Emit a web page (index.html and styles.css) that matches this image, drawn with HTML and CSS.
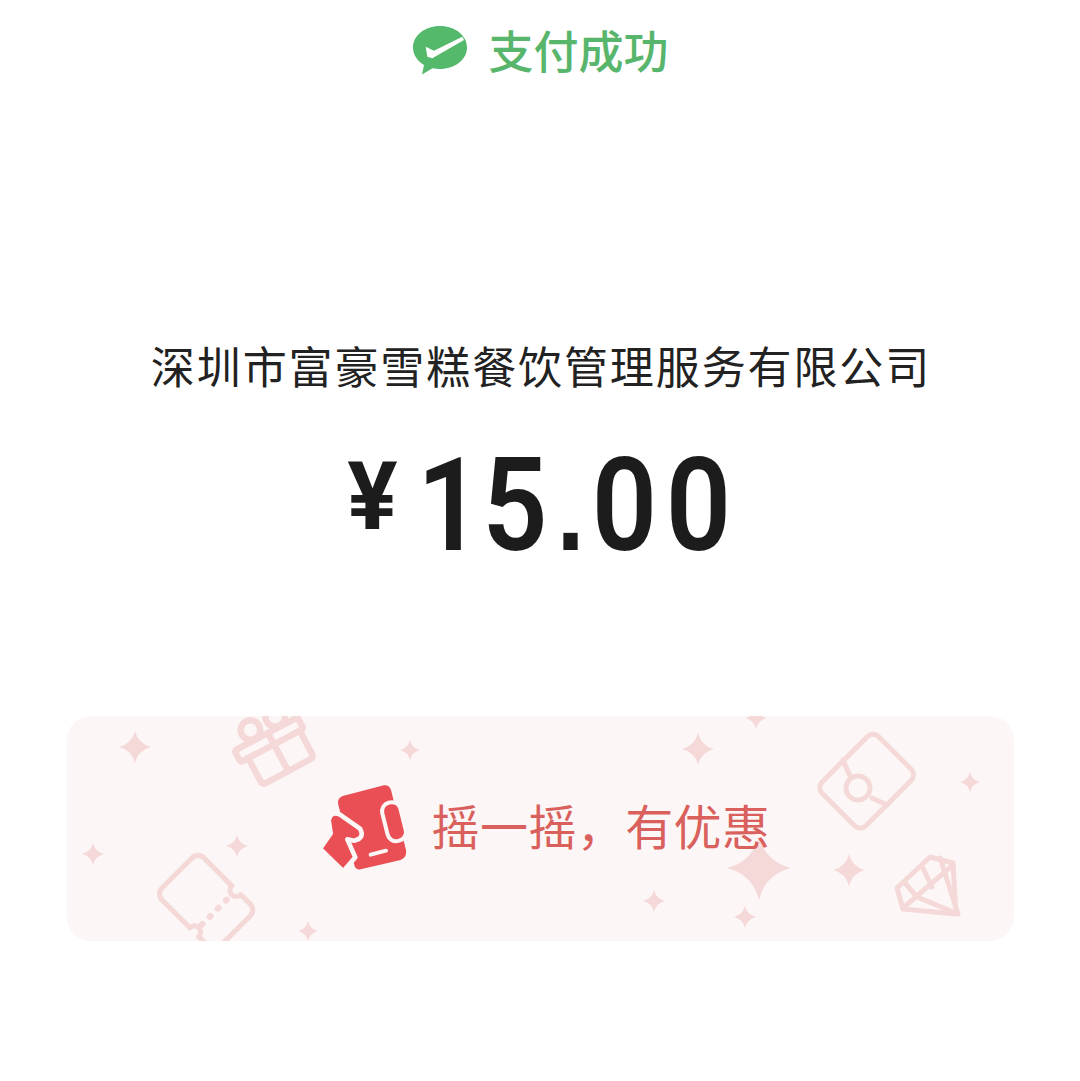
FILE: index.html
```html
<!DOCTYPE html>
<html lang="zh-CN">

<head>
  <meta charset="UTF-8">
  <title>支付成功</title>
  <link rel="stylesheet" href="styles.css">
</head>

<body>
  <div id="container">

    <div class="status">
      <svg class="status-icon" viewBox="0 0 56 52">
        <path fill="#55b96b" d="M28 1C13 1 1 10.500 1 22.500C1 30 5.500 36 12 40L10 49.500L20.500 43.300C23 43.800 25.500 44 28 44C43 44 55 34.500 55 22.500C55 10.500 43 1 28 1Z"/>
        <path fill="#fff" d="M13.700 21.700L22 25.700L50.300 11.700L52 15L20.300 33.300L15.300 31.700Z"/>
      </svg>
      <span class="status-text">支付成功</span>
    </div>

    <div class="merchant">深圳市富豪雪糕餐饮管理服务有限公司</div>

    <div class="amount">
      <span class="currency">¥</span>
      <span class="value"><span class="one">1</span>5<span class="dot">.</span>00</span>
    </div>

    <div class="promo">
      <svg class="promo-bg" viewBox="0 0 947 225">
        <defs>
          <path id="star" d="M0-1Q.2-.2 1 0Q.2.2 0 1Q-.2.2-1 0Q-.2-.2 0-1Z"/>
        </defs>
        <g fill="#f5d9d9">
          <use href="#star" transform="translate(68 31) scale(16)"/>
          <use href="#star" transform="translate(26 138) scale(11)"/>
          <use href="#star" transform="translate(170 130) scale(11)"/>
          <use href="#star" transform="translate(241 215) scale(10)"/>
          <use href="#star" transform="translate(343 34) scale(10)"/>
          <use href="#star" transform="translate(631 33) scale(16)"/>
          <use href="#star" transform="translate(689 2) scale(11)"/>
          <use href="#star" transform="translate(692 152) scale(32)"/>
          <use href="#star" transform="translate(782 154) scale(16)"/>
          <use href="#star" transform="translate(903 66) scale(10)"/>
          <use href="#star" transform="translate(587 185) scale(11)"/>
          <use href="#star" transform="translate(678 201) scale(11)"/>
        </g>
        <g fill="none" stroke="#f5d9d9" stroke-width="5" stroke-linejoin="round" stroke-linecap="round">
          <!-- gift -->
          <g stroke-width="6" transform="translate(199 18) rotate(-28) scale(1.08)">
            <rect x="-33" y="0" width="66" height="12" rx="2"/>
            <path d="M-25 12V36Q-25 40-21 40H25Q29 40 29 36V12"/>
            <path d="M2 0V40"/>
            <circle cx="-11" cy="-10" r="9"/>
            <circle cx="15" cy="-10" r="9"/>
          </g>
          <!-- ticket -->
          <g transform="translate(131 136) rotate(45) scale(1.04)">
            <path d="M8 0H46A6 6 0 0 0 58 0H71A8 8 0 0 1 79 8V49A8 8 0 0 1 71 57H58A6 6 0 0 0 46 57H8A8 8 0 0 1 0 49V8A8 8 0 0 1 8 0Z"/>
            <path d="M52 13V47" stroke-width="6" stroke-dasharray="1 10"/>
          </g>
          <!-- card with a round seal -->
          <rect x="0" y="0" width="62" height="80" rx="8" transform="translate(806 15) rotate(45)"/>
          <circle cx="791" cy="72" r="12"/>
          <path d="M776 44L783 60M805 82L820 89"/>
          <!-- diamond -->
          <path d="M863 141L886 147L889 198L836 193L830 172Z"/>
          <path d="M836 192L886 149M838 167L850 181L891 198M856 152L865 171M873 142L891 198"/>
        </g>
      </svg>
      <div class="promo-main">
        <svg class="promo-icon" viewBox="0 0 360 330">
          <path fill="#e94f54" d="M98 78L222 46Q238 44 243 60L288 240Q292 262 272 270L152 298Q136 300 133 285L85 105Q80 85 98 78Z"/>
          <path fill="#e94f54" stroke="#fcf7f6" stroke-width="14" stroke-linejoin="round" d="M30 236L62 190L56 150Q64 122 90 134L150 176Q166 204 132 212L112 208L136 262L100 304Z"/>
          <rect x="-28" y="-59" width="56" height="118" rx="26" transform="translate(252 155) rotate(-14)" fill="#e94f54" stroke="#fcf7f6" stroke-width="12"/>
          <path stroke="#fcf7f6" stroke-width="12" stroke-linecap="round" d="M182 254L228 242"/>
        </svg>
        <span class="promo-text">摇一摇，有优惠</span>
      </div>
    </div>

  </div>
</body>

</html>
```

FILE: styles.css
```css
body,
html {
  padding: 0;
  margin: 0;
}

body {
  background: #FFF;
  font-family: "Noto Sans CJK SC", sans-serif;
}

#container {
  height: 1081px;
  display: flex;
  flex-direction: column;
  align-items: center;
}

.status {
  display: flex;
  align-items: center;
  height: 50px;
  margin-top: 24px;
  gap: 20px;
}

.status-icon {
  width: 56px;
  height: 52px;
  margin-top: 4px;
  margin-left: 1px;
}

.status-text {
  font-size: 45px;
  font-weight: 500;
  color: #58b56c;
}

.merchant {
  margin-top: 259px;
  padding-left: 2px;
  font-size: 44px;
  line-height: 64px;
  letter-spacing: 1.9px;
  color: #222;
}

.amount {
  display: flex;
  margin-top: 44px;
  height: 130px;
  color: #1c1c1c;
  font-family: Roboto, sans-serif;
}

.currency {
  font-size: 94px;
  font-weight: 700;
  line-height: 112px;
  margin-right: 19px;
}

/* digits are narrower than Roboto's, so squeeze them sideways */
.value {
  width: 316px;
  font-size: 130px;
  font-weight: 600;
  line-height: 130px;
  letter-spacing: 10px;
  white-space: nowrap;
  transform: scaleX(.88);
  transform-origin: left center;
}

.one {
  letter-spacing: 0;
}

.dot {
  font-family: "Liberation Sans", sans-serif;
  font-size: 115px;
  font-weight: 700;
  letter-spacing: 8px;
}

.promo {
  position: relative;
  margin-top: 145px;
  width: 947px;
  height: 225px;
  background: #fcf7f6;
  border-radius: 24px;
  overflow: hidden;
  display: flex;
  justify-content: center;
  align-items: center;
}

.promo-bg {
  position: absolute;
  top: 0;
  left: 0;
  width: 947px;
  height: 225px;
}

.promo-main {
  position: relative;
  display: flex;
  align-items: center;
  gap: 2px;
}

.promo-icon {
  width: 120px;
  height: 110px;
  margin-bottom: 7px;
}

.promo-text {
  font-size: 48px;
  line-height: 60px;
  margin-top: -10px;
  letter-spacing: .4px;
  color: #d9605c;
}
```
